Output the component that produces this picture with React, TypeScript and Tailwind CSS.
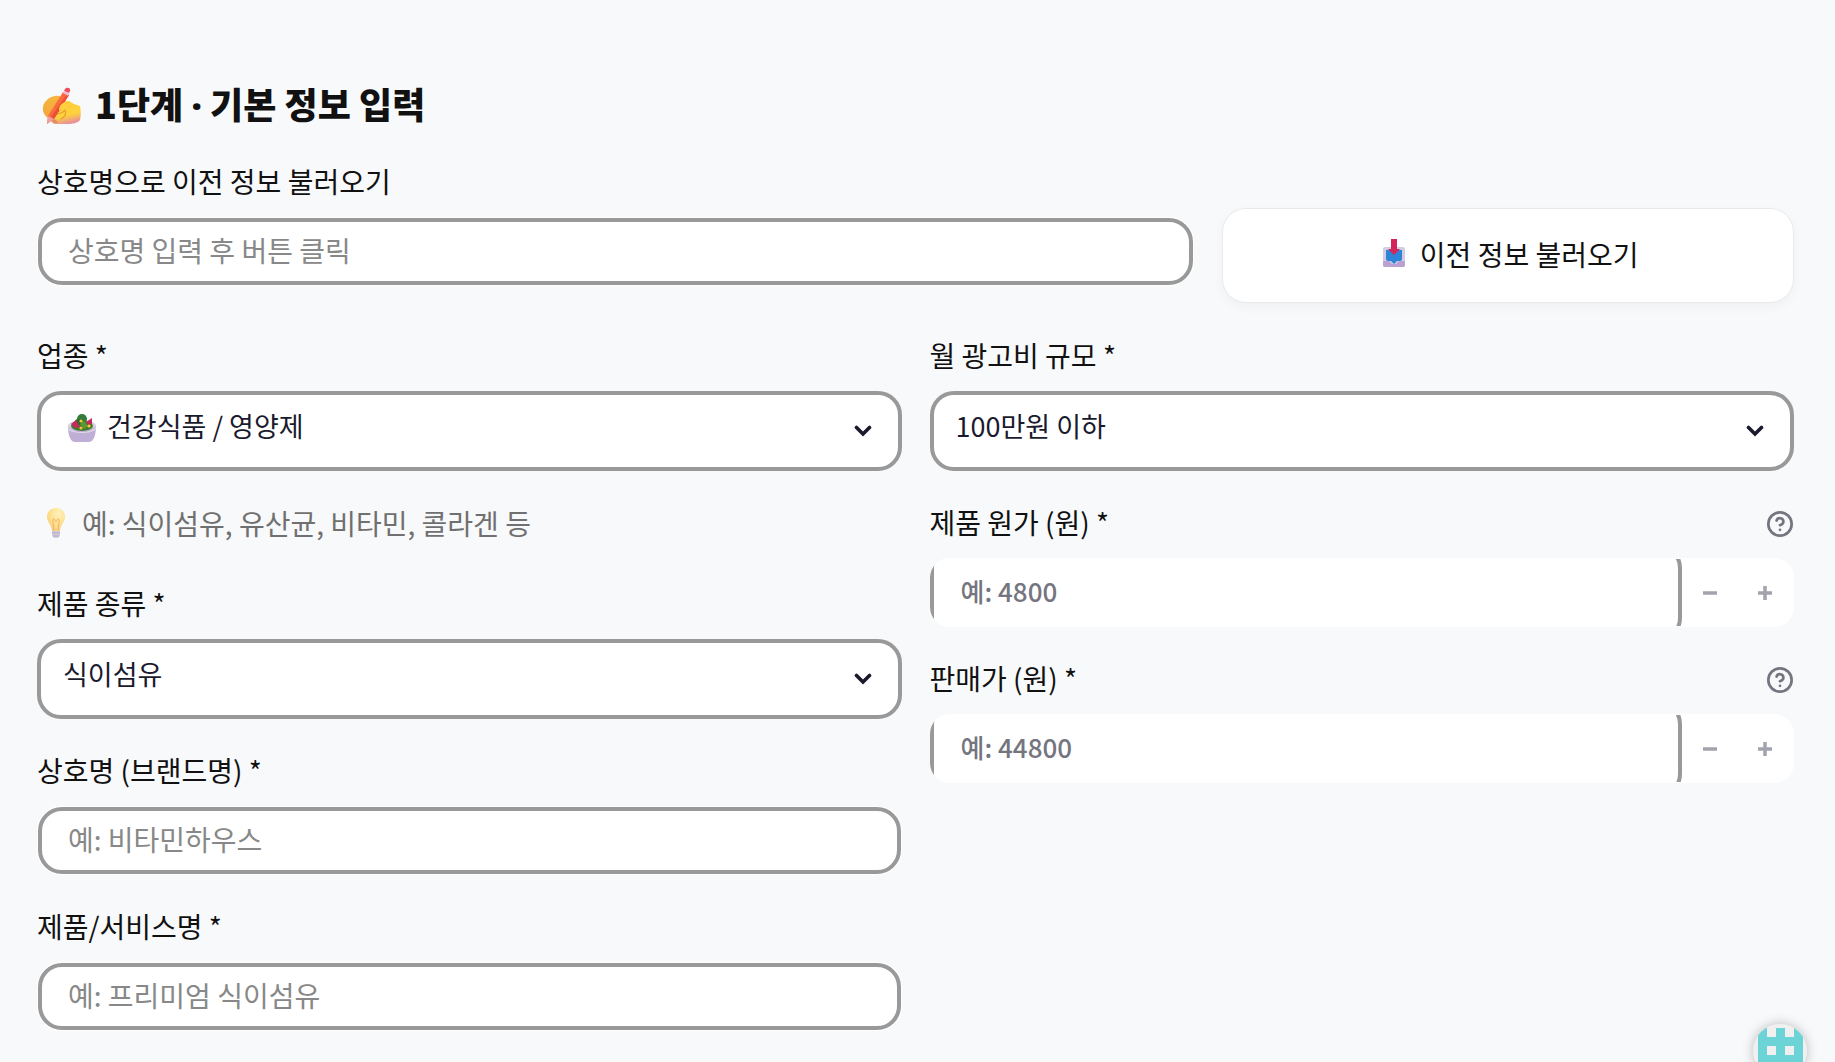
import { useState, type ReactNode } from 'react';
import { CircleQuestionMark } from 'lucide-react';

function WritingHandIcon() {
  return (
    <svg viewBox="0 0 40 40" className="h-10 w-10 shrink-0" aria-hidden="true">
      <defs>
        <linearGradient id="hand" x1="0.2" y1="0" x2="0.5" y2="1">
          <stop offset="0" stopColor="#ffc93c" />
          <stop offset="0.65" stopColor="#ffd23c" />
          <stop offset="1" stopColor="#e88f9a" />
        </linearGradient>
        <linearGradient id="fingers" x1="0" y1="0" x2="0" y2="1">
          <stop offset="0" stopColor="#f5b83c" />
          <stop offset="1" stopColor="#f2a340" />
        </linearGradient>
      </defs>
      <path d="M2 21c1-6 6-10 12-11 5-1 8 2 7 6L9 33c-4-2-8-6-7-12Z" fill="url(#fingers)" />
      <path d="M14 27c0-6 6-12 13-12 3 0 3 2 6 3l6 2c1 5 1 10 0 14-2 3-8 4-12 4H13c-2-2-2-4-1-6 0-2 1-4 2-5Z" fill="url(#hand)" />
      <path d="M14 28c4 0 8-1 10-4 2 3 0 7-4 9" fill="none" stroke="#e8a02f" strokeWidth="1.3" strokeLinecap="round" />
      <path d="M12 33c2 0 4 1 5 4h-5c-2-1-2-3 0-4Z" fill="#e88a62" />
      <path d="m22 6 6 3-15 24-7 5 1-8Z" fill="#fb6a3c" />
      <path d="m26 8 2 1-15 24-3-2Z" fill="#e8503a" />
      <path d="m24 3 1-1c2-1 5 0 4 3l-1 2-5-2Z" fill="#ee4f5f" />
      <path d="m23 5 5 2-1 3-5-3Z" fill="#efb6cf" />
      <path d="m7 30 6 3-7 5Z" fill="#eda09c" />
      <path d="M18 24c0-5 5-9 9-8 3 2 2 5-1 6-3 2-5 3-8 2Z" fill="#ffd03c" />
    </svg>
  );
}

function InboxIcon() {
  return (
    <svg viewBox="0 0 24 30" className="h-[30px] w-6 shrink-0" aria-hidden="true">
      <rect x="1" y="8" width="22" height="20" rx="2" fill="#d3cde2" />
      <path d="M1 22h6l3 3h4l3-3h6v4a2 2 0 0 1-2 2H3a2 2 0 0 1-2-2Z" fill="#b9a1d3" />
      <path d="M4 11h16v9c0 1-1 2-2 2h-3l-3 3-3-3H6c-1 0-2-1-2-2Z" fill="#2e84d6" />
      <path d="M9 0h6v10h3l-6 6-6-6h3Z" fill="#d4245c" />
    </svg>
  );
}

function SaladIcon() {
  return (
    <svg viewBox="0 0 28 28" className="h-7 w-7" aria-hidden="true">
      <ellipse cx="14" cy="12" rx="14" ry="6" fill="#d8d3e4" />
      <path d="M0 12c0 5 1 16 7 16h14c6 0 7-11 7-16-5 6-23 6-28 0Z" fill="#bfafd6" />
      <path d="M0 12c3 8 25 8 28 0 0 2 0 3-1 4-4 4-22 4-26 0-1-1-1-2-1-4Z" fill="#dcd8e8" />
      <ellipse cx="14" cy="12" rx="11" ry="5" fill="#3f7d2c" />
      <circle cx="14" cy="5" r="5" fill="#357b3a" />
      <circle cx="10" cy="8" r="3" fill="#2a6a2c" />
      <path d="m3 10 5-4 4 7-5 1ZM18 8l6-4v6l-4 1Z" fill="#c52a5c" />
      <path d="m12 10 4-3 4 5-4 3Z" fill="#5c9a31" />
      <circle cx="13" cy="7" r="1.6" fill="#ffc53a" />
      <circle cx="13" cy="14" r="1.6" fill="#ffb93a" />
      <circle cx="21" cy="12" r="1.6" fill="#ffc53a" />
    </svg>
  );
}

function BulbIcon() {
  return (
    <svg viewBox="0 0 20 30" className="h-[30px] w-5 shrink-0" aria-hidden="true">
      <defs>
        <radialGradient id="bulb" cx="0.65" cy="0.25" r="0.8">
          <stop offset="0" stopColor="#fff2bd" />
          <stop offset="0.6" stopColor="#fddf8c" />
          <stop offset="1" stopColor="#f8cd83" />
        </radialGradient>
      </defs>
      <path d="M10 0C4 0 1 4 1 9c0 5 4 7 5 14h8c1-7 5-9 5-14 0-5-3-9-9-9Z" fill="url(#bulb)" />
      <path d="M8 23 7 14c-1-3 1-4 2-2 0 2 2 2 2 0 1-2 3-1 2 2l-1 9" fill="none" stroke="#f2b568" strokeWidth="1" />
      <path d="M6 23h8v4c0 2-2 3-4 3s-4-1-4-3Z" fill="#d3cbdc" />
      <path d="M6 25h8M7 28h6" stroke="#b3a7c0" strokeWidth="1" />
    </svg>
  );
}

function Chevron() {
  return (
    <svg viewBox="0 0 18 12" className="pointer-events-none absolute right-[30px] top-[34px] h-3 w-[18px]" aria-hidden="true">
      <path d="m2.500 2.500 6.500 6.500 6.500-6.500" fill="none" stroke="#1a1a2e" strokeWidth="3.600" strokeLinecap="round" />
    </svg>
  );
}

interface FieldProps {
  id: string;
  label: string;
  help?: boolean;
  children: ReactNode;
}

function Field({ id, label, help, children }: FieldProps) {
  return (
    <div className="flex flex-col gap-3.5">
      <div className="flex h-[42px] items-center justify-between">
        <label htmlFor={id} className="pb-0.5">{label}</label>
        {help && (
          <button type="button" aria-label="도움말" className="pt-0.5 text-[#757580]">
            <CircleQuestionMark size={28} strokeWidth={2.3} />
          </button>
        )}
      </div>
      {children}
    </div>
  );
}

function TextBox({ id, placeholder }: { id: string; placeholder: string }) {
  return (
    <div className="rounded-3xl bg-white p-px">
      <input
        id={id}
        type="text"
        placeholder={placeholder}
        className="block h-[67px] w-full rounded-3xl border-4 border-[#999999] bg-white px-[26px] pb-1 placeholder:text-[#888888]"
      />
    </div>
  );
}

interface SelectBoxProps {
  id: string;
  options: string[];
  icon?: ReactNode;
}

function SelectBox({ id, options, icon }: SelectBoxProps) {
  return (
    <div className="relative text-[27px] text-[#1a1a2e]">
      <select
        id={id}
        className={
          icon
            ? 'block h-20 w-full appearance-none rounded-3xl border-4 border-[#999999] bg-white pb-2.5 pl-[66px]'
            : 'block h-20 w-full appearance-none rounded-3xl border-4 border-[#999999] bg-white pb-2.5 pl-[22px]'
        }
      >
        {options.map(o => <option key={o}>{o}</option>)}
      </select>
      {icon && <div className="pointer-events-none absolute left-[31px] top-[23px]">{icon}</div>}
      <Chevron />
    </div>
  );
}

function NumberBox({ id, placeholder }: { id: string; placeholder: string }) {
  const [value, setValue] = useState('');

  function step(by: number) {
    setValue(v => String(Math.max(0, Number(v) + by)));
  }

  return (
    <div className="flex h-[69px] overflow-hidden rounded-[20px] bg-white py-px pr-0.5">
      <div className="flex flex-1 items-center overflow-hidden">
        <input
          id={id}
          type="text"
          inputMode="numeric"
          value={value}
          onChange={e => setValue(e.target.value)}
          placeholder={placeholder}
          className="h-[98px] w-full shrink-0 rounded-3xl border-4 border-[#999999] bg-white px-[27px] pb-1 text-[26px] font-medium placeholder:text-[#757580]"
        />
      </div>
      <button type="button" aria-label="감소" onClick={() => step(-100)} className="flex w-[55px] items-center justify-center">
        <svg viewBox="0 0 14 14" className="h-3.5 w-3.5" aria-hidden="true">
          <path d="M0 7h14" stroke="#a3a3ad" strokeWidth="3.500" />
        </svg>
      </button>
      <button type="button" aria-label="증가" onClick={() => step(100)} className="flex w-[55px] items-center justify-center">
        <svg viewBox="0 0 14 14" className="h-3.5 w-3.5" aria-hidden="true">
          <path d="M0 7h14M7 0v14" stroke="#a3a3ad" strokeWidth="3.500" />
        </svg>
      </button>
    </div>
  );
}

function ProfileBadge() {
  return (
    <button
      type="button"
      aria-label="프로필"
      className="fixed -bottom-4 right-7 h-[54px] w-[54px] overflow-hidden rounded-full bg-[#f0f0f0] shadow-[0_0_12px_rgba(0,0,0,0.25)]"
    >
      <svg viewBox="0 0 54 54" aria-hidden="true">
        <path d="M5 4h9v9h9V4h9v9h9V4h9v46H5Z" fill="#6cd3d6" />
        <path d="M14 22h9v9h-9ZM32 22h9v9h-9Z" fill="#f0f0f0" />
      </svg>
    </button>
  );
}

export default function App() {
  return (
    <main className="min-h-screen bg-[#f8f9fb] pb-[29px] pl-[37px] pr-[41px] pt-20 font-['Noto_Sans_CJK_KR',sans-serif] text-[28px] leading-[42px] text-[#111111]">
      <h1 className="mb-[29px] flex h-[52px] items-center gap-3.5 pl-1 text-4xl font-black">
        <WritingHandIcon />
        <span className="pb-1">
          1단계 <span className="font-['Noto_Sans',sans-serif]">·</span> 기본 정보 입력
        </span>
      </h1>

      <div className="mb-8 flex gap-7">
        <div className="w-[calc(66.6667%-14px)]">
          <Field id="lookup" label="상호명으로 이전 정보 불러오기">
            <TextBox id="lookup" placeholder="상호명 입력 후 버튼 클릭" />
          </Field>
        </div>
        <button
          type="button"
          className="mt-[47px] flex h-[95px] flex-1 items-center justify-center gap-3.5 rounded-3xl border border-[#e8eaed] bg-white pb-1 pl-1 shadow-[0_4px_12px_rgba(0,0,0,0.04)]"
        >
          <InboxIcon />
          이전 정보 불러오기
        </button>
      </div>

      <div className="grid grid-cols-2 items-start gap-7">
        <div className="flex flex-col gap-[31px]">
          <Field id="industry" label="업종 *">
            <SelectBox id="industry" options={['건강식품 / 영양제']} icon={<SaladIcon />} />
          </Field>
          <p className="flex h-[50px] items-start gap-4 pl-[9px] text-[#707070]">
            <span className="flex h-[42px] items-center"><BulbIcon /></span>
            예: 식이섬유, 유산균, 비타민, 콜라겐 등
          </p>
          <Field id="kind" label="제품 종류 *">
            <SelectBox id="kind" options={['식이섬유', '유산균', '비타민', '콜라겐']} />
          </Field>
          <Field id="brand" label="상호명 (브랜드명) *">
            <TextBox id="brand" placeholder="예: 비타민하우스" />
          </Field>
          <Field id="product" label="제품/서비스명 *">
            <TextBox id="product" placeholder="예: 프리미엄 식이섬유" />
          </Field>
        </div>

        <div className="flex flex-col gap-[31px]">
          <Field id="budget" label="월 광고비 규모 *">
            <SelectBox id="budget" options={['100만원 이하']} />
          </Field>
          <Field id="cost" label="제품 원가 (원) *" help>
            <NumberBox id="cost" placeholder="예: 4800" />
          </Field>
          <Field id="price" label="판매가 (원) *" help>
            <NumberBox id="price" placeholder="예: 44800" />
          </Field>
        </div>
      </div>

      <ProfileBadge />
    </main>
  );
}
